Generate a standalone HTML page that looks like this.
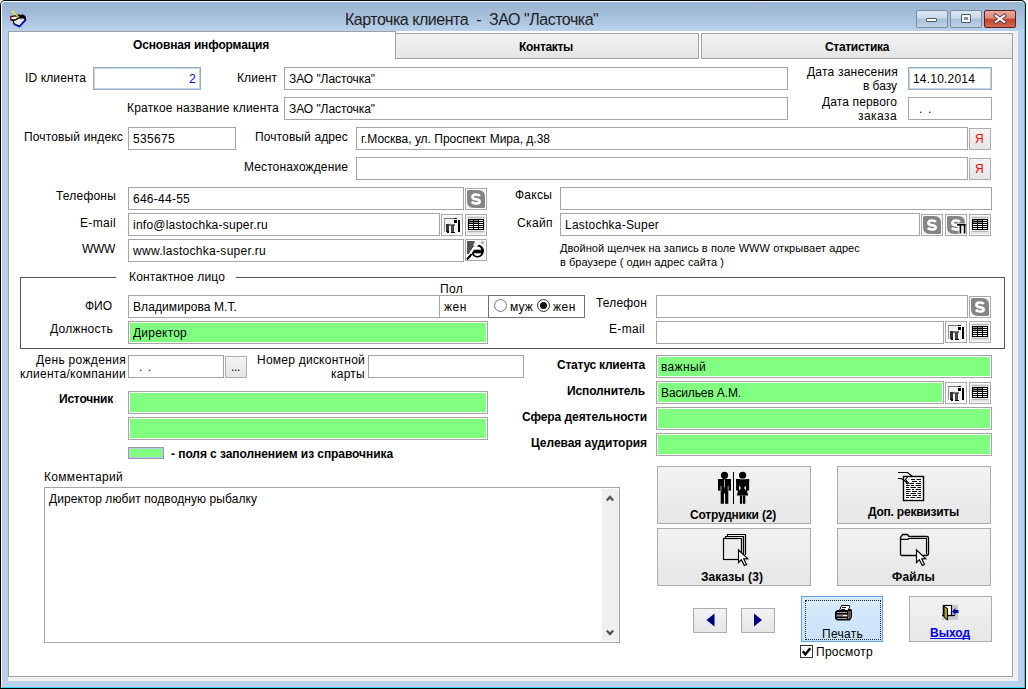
<!DOCTYPE html>
<html><head><meta charset="utf-8">
<style>
*{box-sizing:border-box}
html,body{margin:0;padding:0}
body{width:1028px;height:689px;position:relative;overflow:hidden;background:#fff;font-family:"Liberation Sans",sans-serif;font-size:12px;color:#000}
.a{position:absolute}
#win{left:0;top:0;width:1026px;height:689px;background:#000;border-top-left-radius:5px;border-top-right-radius:5px}
#hl{left:1px;top:1px;width:1024px;height:687px;background:#37d6f2;border-top-left-radius:4px;border-top-right-radius:4px}
#wl{left:1px;top:1px;width:1023px;height:686px;background:#fff;border-top-left-radius:4px;border-top-right-radius:4px}
#fr{left:2px;top:2px;width:1022px;height:685px;background:linear-gradient(#99b4d1 0px,#a6bfda 14px,#b9d1ea 29px,#b9d1ea);border-top-left-radius:3px;border-top-right-radius:3px}
#client{left:8px;top:31px;width:1010px;height:650px;background:#f0f0f0}
#title{left:345px;top:11px;font-size:16px;color:#1e1e1e;white-space:nowrap;letter-spacing:-0.47px}
.t{position:absolute;white-space:nowrap;line-height:14px}
.r{text-align:right}
.b{font-weight:bold}
.in{position:absolute;background:#fff;border:1px solid #a5a5a5}
.gr{background:#80ff80;box-shadow:inset 0 0 0 1px #fff}
.it{position:absolute;left:4px;top:4px;white-space:nowrap;line-height:14px}
.sb{position:absolute;border:1px solid #adadad;background:linear-gradient(#f3f3f3,#e6e6e6)}
.ib{position:absolute;width:22px;height:22px;border:1px solid #a9a9a9;background:#f4f4f4;box-shadow:inset 0 0 0 1px #fff}
.gb{background:#e3e3e3}
.sk{position:absolute;width:18px;height:18px;background:#848484;border-radius:0 7px 0 7px;color:#fff;font-weight:bold;font-size:16px;line-height:18px;text-align:center}
.bb{position:absolute;border:1px solid #acacac;background:linear-gradient(#f2f2f2,#e6e6e6)}
</style></head><body>
<div id="win" class="a"></div>
<div id="hl" class="a"></div>
<div id="wl" class="a"></div>
<div id="fr" class="a"></div>
<div id="client" class="a"></div>
<div id="title" class="a">Карточка клиента&nbsp; - &nbsp;ЗАО "Ласточка"</div>

<!-- tabs -->
<div class="a" style="left:8px;top:31px;width:1005px;height:646px;background:#fff;border:1px solid #a0a0a0;border-top:none"></div>
<div class="a" style="left:395px;top:31px;width:618px;height:2px;background:#fdfdfd"></div>
<div class="a" style="left:8px;top:31px;width:388px;height:3px;border:1px solid #a0a0a0;border-bottom:none;background:#fff"></div>
<div class="a" style="left:395px;top:33px;width:304px;height:26px;border:1px solid #a0a0a0;background:linear-gradient(#f2f2f2,#e5e5e5)"></div>
<div class="a" style="left:701px;top:33px;width:312px;height:26px;border:1px solid #a0a0a0;background:linear-gradient(#f2f2f2,#e5e5e5)"></div>
<div class="a" style="left:699px;top:33px;width:2px;height:26px;background:#fff"></div>
<div class="t b" style="left:133px;top:38px;letter-spacing:-0.148px">Основная информация</div>
<div class="t b" style="left:519px;top:40px;letter-spacing:-0.322px">Контакты</div>
<div class="t b" style="left:825px;top:40px;letter-spacing:-0.306px">Статистика</div>


<!-- caption buttons -->
<div class="a" style="left:916px;top:10px;width:32px;height:18px;border:1px solid #7b8ba0;border-radius:2px;background:linear-gradient(#dbe6f3 0,#cad9ea 45%,#a9bfd8 50%,#bfd2e6 100%)"></div>
<div class="a" style="left:926px;top:18px;width:11px;height:4px;background:#fff;border:1px solid #4a5a70;border-radius:1px"></div>
<div class="a" style="left:950px;top:10px;width:32px;height:18px;border:1px solid #7b8ba0;border-radius:2px;background:linear-gradient(#dbe6f3 0,#cad9ea 45%,#a9bfd8 50%,#bfd2e6 100%)"></div>
<div class="a" style="left:961px;top:14px;width:10px;height:9px;background:#fff;border:1px solid #4a5a70;border-radius:1px"><div class="a" style="left:2px;top:2px;width:4px;height:3px;background:#7d8fa5"></div></div>
<div class="a" style="left:984px;top:10px;width:32px;height:18px;border:1px solid #5a2020;border-radius:2px;background:linear-gradient(#e9a99b 0,#de8a78 45%,#c7402a 50%,#d26a52 100%)"></div>
<svg class="a" style="left:993px;top:13px" width="14" height="12" viewBox="0 0 14 12"><path d="M2.6 2.6 L11.4 9 M11.4 2.6 L2.6 9" stroke="#4a3a48" stroke-width="3.6" stroke-linecap="square" fill="none"/><path d="M2.7 2.7 L11.3 8.9 M11.3 2.7 L2.7 8.9" stroke="#fff" stroke-width="2" stroke-linecap="square" fill="none"/></svg>

<!-- title icon -->
<svg class="a" style="left:9px;top:10px" width="18" height="18" viewBox="9 10 18 18">
<path d="M10 16 L16 15.3 L18.5 14.3 L21 15 L22.5 14.2 L25.5 16 L26.3 19.5 L19.5 27.2 L16.5 25.8 L13.5 24.5 L12.8 21 L10 20.3 Z" fill="#000"/>
<path d="M11.3 16.9 L16.3 16.6 L18 17.6 L15.2 19.3 L11.3 19.3 Z" fill="#f4f4f4"/>
<path d="M13.8 21.3 L17.3 19.8 L19.3 18.6 L23.3 18.4 L24.6 19.6 L19.6 25.2 L17 24.6 L14.6 23.2 Z" fill="#eee"/>
<path d="M15.5 22.5 L18 21 M18 23.5 L21 21.5 M20 19.8 L22.5 19.5" stroke="#bbb" stroke-width="0.8"/>
<rect x="10" y="16.2" width="1.3" height="3.7" fill="#e00000"/>
<path d="M14.2 24.6 L19.4 26.9 L26 20" stroke="#0000ff" stroke-width="1.1" fill="none"/>
<path d="M12 11.3 L19 17.5" stroke="#000" stroke-width="0.6" transform="translate(0.6,0.4)"/>
<path d="M12 11 L19 17.3" stroke="#ffff00" stroke-width="1.1"/>
</svg>

<!-- row 1 -->
<div class="t r" style="right:942px;top:71px;letter-spacing:0.125px">ID клиента</div>
<div class="in" style="left:93px;top:67px;width:108px;height:23px;border-color:#a1aab8"><div class="a" style="left:0;top:0;right:0;bottom:0;border:1px solid #bcd6f5"></div><div class="it" style="right:4px;left:auto;color:#0000ff;letter-spacing:0.328px">2</div></div>
<div class="t r" style="right:751px;top:71px;letter-spacing:0.086px">Клиент</div>
<div class="in" style="left:284px;top:67px;width:504px;height:23px"><div class="it" style="letter-spacing:-0.066px">ЗАО "Ласточка"</div></div>
<div class="t r" style="right:130px;top:65px;letter-spacing:0.224px">Дата занесения</div>
<div class="t r" style="right:131px;top:79px;letter-spacing:-0.031px">в базу</div>
<div class="in" style="left:908px;top:67px;width:84px;height:23px;border-color:#a1aab8"><div class="a" style="left:0;top:0;right:0;bottom:0;border:1px solid #bcd6f5"></div><div class="it" style="letter-spacing:0.197px">14.10.2014</div></div>

<div class="t r" style="right:749px;top:101px;letter-spacing:0.211px">Краткое название клиента</div>
<div class="in" style="left:284px;top:97px;width:504px;height:23px"><div class="it" style="letter-spacing:-0.066px">ЗАО "Ласточка"</div></div>
<div class="t r" style="right:131px;top:95px;letter-spacing:0.132px">Дата первого</div>
<div class="t r" style="right:131px;top:109px;letter-spacing:0.435px">заказа</div>
<div class="in" style="left:908px;top:97px;width:84px;height:23px"><div class="it" style="left:10px;top:4px;letter-spacing:-0.328px">.&nbsp;&nbsp;.</div></div>

<!-- row 3 -->
<div class="t r" style="right:905px;top:130px;letter-spacing:0.151px">Почтовый индекс</div>
<div class="in" style="left:128px;top:127px;width:108px;height:23px"><div class="it" style="letter-spacing:0.328px">535675</div></div>
<div class="t r" style="right:680px;top:130px;letter-spacing:0.117px">Почтовый адрес</div>
<div class="in" style="left:356px;top:127px;width:612px;height:23px"><div class="it" style="letter-spacing:0.000px">г.Москва, ул. Проспект Мира, д.38</div></div>
<div class="sb" style="left:969px;top:128px;width:22px;height:22px"><div class="it" style="left:5px;top:3px;color:#ff0000;letter-spacing:0.328px">Я</div></div>
<div class="t r" style="right:680px;top:160px;letter-spacing:0.118px">Местонахождение</div>
<div class="in" style="left:356px;top:157px;width:612px;height:23px"></div>
<div class="sb" style="left:969px;top:158px;width:22px;height:22px"><div class="it" style="left:5px;top:3px;color:#ff0000;letter-spacing:0.328px">Я</div></div>

<!-- phones -->
<div class="t r" style="right:912px;top:189px;letter-spacing:0.199px">Телефоны</div>
<div class="in" style="left:128px;top:187px;width:336px;height:23px"><div class="it" style="letter-spacing:0.255px">646-44-55</div></div>
<div class="t r" style="right:912px;top:216px;letter-spacing:0.331px">E-mail</div>
<div class="in" style="left:128px;top:213px;width:312px;height:23px"><div class="it" style="letter-spacing:0.236px">info@lastochka-super.ru</div></div>
<div class="t r" style="right:913px;top:242px;letter-spacing:-0.328px">WWW</div>
<div class="in" style="left:128px;top:239px;width:336px;height:23px"><div class="it" style="letter-spacing:0.285px">www.lastochka-super.ru</div></div>
<div class="t r" style="right:476px;top:188px;letter-spacing:0.237px">Факсы</div>
<div class="in" style="left:560px;top:187px;width:432px;height:23px"></div>
<div class="t r" style="right:475px;top:216px;letter-spacing:0.388px">Скайп</div>
<div class="in" style="left:560px;top:213px;width:360px;height:23px"><div class="it" style="letter-spacing:0.220px">Lastochka-Super</div></div>
<div class="t" style="left:560px;top:241px;font-size:11px;letter-spacing:0.067px">Двойной щелчек на запись в поле WWW открывает адрес</div>
<div class="t" style="left:560px;top:255px;font-size:11px;letter-spacing:0.052px">в браузере ( один адрес сайта )</div>

<!-- contact group -->
<div class="a" style="left:20px;top:277px;width:985px;height:72px;border:1px solid #555"></div>
<div class="a" style="left:116px;top:272px;width:120px;height:10px;background:#fff"></div>
<div class="t" style="left:129px;top:270px;letter-spacing:0.159px">Контактное лицо</div>
<div class="t r" style="right:916px;top:299px;letter-spacing:-0.026px">ФИО</div>
<div class="in" style="left:128px;top:295px;width:312px;height:23px"><div class="it" style="letter-spacing:0.090px">Владимирова М.Т.</div></div>
<div class="t" style="left:440px;top:282px;letter-spacing:0.323px">Пол</div>
<div class="in" style="left:439px;top:295px;width:50px;height:23px"><div class="it" style="letter-spacing:0.557px">жен</div></div>
<div class="a" style="left:488px;top:295px;width:97px;height:23px;border:1px solid #707070;background:#fff"></div>
<div class="t r" style="right:915px;top:322px;letter-spacing:0.250px">Должность</div>
<div class="in gr" style="left:128px;top:321px;width:360px;height:23px"><div class="it" style="letter-spacing:0.217px">Директор</div></div>
<div class="t r" style="right:381px;top:296px;letter-spacing:0.174px">Телефон</div>
<div class="in" style="left:656px;top:295px;width:312px;height:23px"></div>
<div class="t r" style="right:383px;top:322px;letter-spacing:0.331px">E-mail</div>
<div class="in" style="left:656px;top:321px;width:288px;height:23px"></div>

<!-- birthday etc -->
<div class="t r" style="right:902px;top:353px;letter-spacing:0.328px">День рождения</div>
<div class="t r" style="right:902px;top:367px;letter-spacing:0.296px">клиента/компании</div>
<div class="in" style="left:128px;top:355px;width:96px;height:23px"><div class="it" style="left:10px;top:4px;letter-spacing:-0.328px">.&nbsp;&nbsp;.</div></div>
<div class="sb" style="left:225px;top:356px;width:22px;height:22px"><div class="it" style="left:5px;top:3px;letter-spacing:-0.328px">...</div></div>
<div class="t r" style="right:663px;top:353px;letter-spacing:0.240px">Номер дисконтной</div>
<div class="t r" style="right:663px;top:367px;letter-spacing:0.256px">карты</div>
<div class="in" style="left:368px;top:355px;width:156px;height:23px"></div>
<div class="t r b" style="right:915px;top:392px;letter-spacing:-0.205px">Источник</div>
<div class="in gr" style="left:128px;top:391px;width:360px;height:23px"></div>
<div class="in gr" style="left:128px;top:417px;width:360px;height:23px"></div>
<div class="a" style="left:128px;top:447px;width:36px;height:12px;border:1px solid #9a9cae;background:#80ff80;box-shadow:inset 0 0 0 1px #b8cce8"></div>
<div class="t b" style="left:171px;top:447px;letter-spacing:-0.067px">- поля с заполнением из справочника</div>

<div class="t r b" style="right:383px;top:358px;letter-spacing:-0.241px">Статус клиента</div>
<div class="in gr" style="left:656px;top:355px;width:336px;height:23px"><div class="it" style="letter-spacing:0.352px">важный</div></div>
<div class="t r b" style="right:383px;top:384px;letter-spacing:-0.125px">Исполнитель</div>
<div class="in gr" style="left:656px;top:381px;width:288px;height:23px"><div class="it" style="letter-spacing:-0.127px">Васильев А.М.</div></div>
<div class="t r b" style="right:381px;top:410px;letter-spacing:-0.058px">Сфера деятельности</div>
<div class="in gr" style="left:656px;top:407px;width:336px;height:23px"></div>
<div class="t r b" style="right:381px;top:436px;letter-spacing:-0.043px">Целевая аудитория</div>
<div class="in gr" style="left:656px;top:433px;width:336px;height:23px"></div>

<!-- comment -->
<div class="t" style="left:44px;top:470px;letter-spacing:0.312px">Комментарий</div>
<div class="in" style="left:44px;top:487px;width:576px;height:156px"><div class="it" style="left:4px;top:4px;letter-spacing:0.080px">Директор любит подводную рыбалку</div>
<div class="a" style="left:557px;top:1px;width:17px;height:152px;background:#f0f0f0"></div></div>

<!-- big buttons -->
<div class="bb" style="left:657px;top:466px;width:154px;height:58px"></div>
<div class="t b" style="left:690px;top:508px;letter-spacing:-0.196px">Сотрудники (2)</div>
<div class="bb" style="left:837px;top:466px;width:154px;height:58px"></div>
<div class="t b" style="left:868px;top:505px;letter-spacing:-0.224px">Доп. реквизиты</div>
<div class="bb" style="left:657px;top:528px;width:154px;height:58px"></div>
<div class="t b" style="left:701px;top:570px;letter-spacing:0.078px">Заказы (3)</div>
<div class="bb" style="left:837px;top:528px;width:154px;height:58px"></div>
<div class="t b" style="left:892px;top:570px;letter-spacing:0.166px">Файлы</div>

<!-- nav -->
<div class="bb" style="left:693px;top:608px;width:34px;height:25px"></div>
<div class="bb" style="left:741px;top:608px;width:34px;height:25px"></div>
<div class="a" style="left:801px;top:596px;width:82px;height:46px;border:1px solid #5ea6e8;background:linear-gradient(#d9ebfb,#c8e2f8)"></div>
<div class="t" style="left:822px;top:627px;letter-spacing:0.281px">Печать</div>
<div class="bb" style="left:909px;top:596px;width:83px;height:46px"></div>
<div class="t b" style="left:930px;top:626px;color:#0000ff;text-decoration:underline;text-decoration-skip-ink:none;letter-spacing:-0.019px">Выход</div>
<div class="a" style="left:800px;top:645px;width:13px;height:13px;border:1px solid #333;background:#fff"></div>
<div class="t" style="left:816px;top:645px;letter-spacing:0.275px">Просмотр</div>

<!-- small icon buttons -->
<div class="ib" style="left:465px;top:188px"></div><svg class="a" style="left:467px;top:190px" width="18" height="18"><use href="#skic"/></svg>
<div class="ib" style="left:441px;top:214px"></div><svg class="a" style="left:441px;top:214px" width="22" height="22"><use href="#docic"/></svg>
<div class="ib gb" style="left:465px;top:214px"></div><svg class="a" style="left:465px;top:214px" width="22" height="22"><use href="#gridic"/></svg>
<div class="ib" style="left:465px;top:239px"></div><svg class="a" style="left:465px;top:239px" width="22" height="22"><use href="#ieic"/></svg>
<div class="ib" style="left:921px;top:214px"></div><svg class="a" style="left:923px;top:216px" width="18" height="18"><use href="#skic"/></svg>
<div class="ib" style="left:945px;top:214px"></div><svg class="a" style="left:947px;top:216px" width="18" height="18"><use href="#skic"/></svg><svg class="a" style="left:945px;top:214px" width="22" height="22"><path d="M11 9.5 H21 V20.5 H13.5 V12.5 H11 Z" fill="#fff" opacity="0.9"/><rect x="12" y="10" width="8.5" height="1.6" fill="#000"/><rect x="14.6" y="10" width="1.6" height="9.5" fill="#000"/><rect x="18.8" y="10" width="1.6" height="9.5" fill="#000"/></svg>
<div class="ib gb" style="left:969px;top:214px"></div><svg class="a" style="left:969px;top:214px" width="22" height="22"><use href="#gridic"/></svg>
<div class="ib" style="left:969px;top:296px"></div><svg class="a" style="left:971px;top:298px" width="18" height="18"><use href="#skic"/></svg>
<div class="ib" style="left:945px;top:321px"></div><svg class="a" style="left:945px;top:321px" width="22" height="22"><use href="#docic"/></svg>
<div class="ib gb" style="left:969px;top:321px"></div><svg class="a" style="left:969px;top:321px" width="22" height="22"><use href="#gridic"/></svg>
<div class="ib" style="left:945px;top:382px"></div><svg class="a" style="left:945px;top:382px" width="22" height="22"><use href="#docic"/></svg>
<div class="ib gb" style="left:969px;top:382px"></div><svg class="a" style="left:969px;top:382px" width="22" height="22"><use href="#gridic"/></svg>

<svg width="0" height="0" style="position:absolute">
<defs>
<g id="skic">
<path d="M0 1.5 Q0 0 1.5 0 H11 Q18 0 18 7 V16.5 Q18 18 16.5 18 H7 Q0 18 0 11 Z" fill="#858585"/>
<path d="M12.8 6 Q11.7 4.5 8.8 4.5 Q5.4 4.5 5.4 7.1 Q5.4 8.8 8.3 9.2 L9.7 9.4 Q12.6 9.8 12.6 11.7 Q12.6 13.5 9 13.5 Q6 13.5 4.9 11.7" stroke="#fff" stroke-width="2.7" fill="none"/>
</g>
<g id="gridic">
<rect x="3" y="3" width="16" height="1" fill="#b8b8b8"/>
<rect x="3" y="17" width="16" height="1" fill="#b8b8b8"/>
<rect x="3" y="5" width="16" height="11" fill="#000"/>
<g fill="#fff"><rect x="14" y="6" width="4" height="1"/><rect x="14" y="8" width="4" height="1"/>
<rect x="4" y="10" width="4" height="1"/><rect x="9" y="10" width="4" height="1"/><rect x="14" y="10" width="4" height="1"/>
<rect x="4" y="12" width="4" height="1"/><rect x="9" y="12" width="4" height="1"/><rect x="14" y="12" width="4" height="1"/>
<rect x="4" y="14" width="4" height="1"/><rect x="9" y="14" width="4" height="1"/><rect x="14" y="14" width="4" height="1"/></g>
<g fill="#8a8a8a"><rect x="4" y="6" width="4" height="1"/><rect x="9" y="6" width="4" height="1"/><rect x="4" y="8" width="4" height="1"/><rect x="9" y="8" width="4" height="1"/></g>
</g>
<g id="docic" shape-rendering="crispEdges">
<rect x="3" y="4" width="10" height="1" fill="#777"/>
<rect x="13" y="4" width="3" height="1" fill="#111"/>
<rect x="3" y="5" width="1" height="13" fill="#999"/>
<rect x="13" y="6" width="3" height="3" fill="#000"/>
<rect x="17" y="6" width="2" height="12" fill="#000"/>
<rect x="5" y="10" width="9" height="2" fill="#777"/>
<rect x="5" y="10" width="3" height="8" fill="#333"/>
<rect x="10" y="11" width="3" height="8" fill="#444"/>
<rect x="6" y="17" width="2" height="2" fill="#000"/>
<rect x="10" y="18" width="4" height="1" fill="#000"/>
</g>
<g id="ieic">
<path d="M2 2 H10 L5 15 L2 15 Z" fill="#555"/>
<circle cx="12.5" cy="12" r="6.5" fill="#000"/>
<path d="M8.5 10.8 Q9.5 7.5 12.5 7.5 Q15.5 7.5 16.2 10.8 Z" fill="#fff"/>
<path d="M8.8 13.5 H16.5 Q15.5 17 12.5 17 Q10 17 8.8 15 Z" fill="#fff"/>
<rect x="8" y="13" width="9" height="1.3" fill="#000"/>
<path d="M3.5 20 Q6 10 14 4" stroke="#fff" stroke-width="2.2" fill="none"/>
<path d="M2 20.5 L5 17 L6.5 15" stroke="#000" stroke-width="2" fill="none"/>
<circle cx="17.5" cy="3.5" r="1.5" fill="#aaa"/>
</g>
</defs>
</svg>

<!-- radio buttons -->
<div class="a" style="left:494px;top:299px;width:13px;height:13px;border-radius:50%;border:1px solid #777;background:radial-gradient(#fff 40%,#ececec)"></div>
<div class="t" style="left:510px;top:300px;letter-spacing:0.146px">муж</div>
<div class="a" style="left:537px;top:299px;width:13px;height:13px;border-radius:50%;border:1px solid #333;background:#fff"></div>
<div class="a" style="left:540px;top:302px;width:7px;height:7px;border-radius:50%;background:#111"></div>
<div class="t" style="left:553px;top:300px;letter-spacing:0.557px">жен</div>

<!-- big button icons -->
<svg class="a" style="left:718px;top:471px" width="33" height="34" viewBox="0 0 33 34">
<g fill="#000">
<circle cx="6.5" cy="4.3" r="3.6"/>
<rect x="0" y="8" width="13" height="4"/>
<rect x="0" y="8" width="2.9" height="11.6"/>
<rect x="10.1" y="8" width="2.9" height="11.6"/>
<rect x="2.7" y="8" width="7.6" height="14.5"/>
<rect x="2.7" y="22" width="3.2" height="10.8"/>
<rect x="7.1" y="22" width="3.2" height="10.8"/>
<rect x="15" y="1" width="1" height="32"/>
<circle cx="24.6" cy="4.3" r="3.6"/>
<rect x="18.1" y="8" width="13" height="4"/>
<rect x="18.1" y="8" width="2.9" height="11.6"/>
<rect x="28.2" y="8" width="2.9" height="11.6"/>
<rect x="20" y="8" width="9" height="12.5"/>
<path d="M20 20 H29 L30.2 24.6 H18.8 Z"/>
<rect x="21.9" y="24.5" width="2.3" height="8.3"/>
<rect x="25" y="24.5" width="2.3" height="8.3"/>
</g>
<g fill="#fff">
<rect x="6.2" y="8.5" width="0.7" height="8"/>
<rect x="2.7" y="15" width="0.6" height="4.6"/>
<rect x="9.8" y="15" width="0.6" height="4.6"/>
<path d="M21.2 14.5 L23 17 L21.2 19.5 Z"/>
<path d="M27.9 14.5 L26.1 17 L27.9 19.5 Z"/>
<rect x="21.5" y="7.6" width="6" height="0.7"/>
</g>
</svg>

<svg class="a" style="left:722px;top:533px" width="28" height="34" viewBox="0 0 28 34">
<g stroke="#000" stroke-width="1.2" fill="none">
<path d="M5.5 3.5 V1.5 H23.5 V22"/>
<path d="M3.5 5.5 V3.5 H21.5 V23"/>
<rect x="1.5" y="5.5" width="18" height="21" fill="#ececec"/>
</g>
<path d="M16.5 17 V29.5 L19.3 26.8 L22.3 32.5 L24.5 31.5 L21.7 25.8 L25.7 25.6 Z" fill="#fff" stroke="#000" stroke-width="1.2" stroke-linejoin="miter"/>
</svg>

<svg class="a" style="left:896px;top:470px" width="30" height="32" viewBox="0 0 30 32">
<rect x="7.5" y="6.5" width="20" height="24" fill="#fff" stroke="#000" stroke-width="1.4"/>
<g stroke="#000" stroke-width="1.1">
<path d="M10 9.5 H13 M15 9.5 H19 M20.5 9.5 H25"/>
<path d="M10 11.5 H11 M16 11.5 H21 M23 11.5 H25"/>
<path d="M10 13.5 H12 M14 13.5 H18 M20 13.5 H25"/>
<path d="M10 15.5 H13.5 M15 15.5 H18 M19.5 15.5 H25"/>
<path d="M10 17.5 H13 M14.5 17.5 H20 M21.5 17.5 H25"/>
<path d="M10 19.5 H14.5 M16 19.5 H18 M19.5 19.5 H25"/>
<path d="M10 21.5 H14.5 M16 21.5 H21 M22.5 21.5 H25"/>
<path d="M10 23.5 H13 M14.5 23.5 H20 M21.5 23.5 H25"/>
<path d="M10 25.5 H15 M16.5 25.5 H21 M22.5 25.5 H25"/>
<path d="M10 27.5 H13 M14.5 27.5 H19 M20.5 27.5 H25"/>
</g>
<path d="M2 2.5 H11.5 L16.5 6.5" stroke="#000" stroke-width="1.2" fill="none"/>
<path d="M2 8.5 H5 L9 11 L12 14" stroke="#000" stroke-width="1.2" fill="none"/>
<path d="M13.5 14 L9.5 9.5 L12 6.5" stroke="#000" stroke-width="1.1" fill="#fff"/>
</svg>

<svg class="a" style="left:898px;top:533px" width="32" height="34" viewBox="0 0 32 34">
<path d="M2.5 5 Q2.5 3.5 4 2.5 L4.5 1.5 H9.5 L11 3.5 H29 Q30.5 3.5 30.5 5 V20.5 Q30.5 22.5 28.5 22.5 H4 Q2.5 22.5 2.5 21 Z" fill="#ececec" stroke="#000" stroke-width="1.3"/>
<path d="M3 6.3 H10 L10.5 5.5 H28.5 V21.5" stroke="#000" stroke-width="1.2" fill="none"/>
<path d="M18.5 17 V29.5 L21.3 26.8 L24.3 32.5 L26.5 31.5 L23.7 25.8 L27.7 25.6 Z" fill="#fff" stroke="#000" stroke-width="1.2"/>
</svg>

<!-- nav triangles -->
<svg class="a" style="left:705px;top:612px" width="12" height="16"><path d="M1.5 8 L9.5 1.5 V14.5 Z" fill="#000080"/></svg>
<svg class="a" style="left:752px;top:612px" width="12" height="16"><path d="M10 8 L2 1.5 V14.5 Z" fill="#000080"/></svg>

<!-- print focus + icon -->
<div class="a" style="left:805px;top:600px;width:76px;height:40px;border:1px dotted #222"></div>
<svg class="a" style="left:834px;top:604px" width="20" height="17" viewBox="834 604 20 17">
<path d="M839.5 610.5 L841.5 605.5 H849.5 V607.5 L848 610.5 Z" fill="#fff" stroke="#000" stroke-width="1"/>
<path d="M842 607.5 H846 M841.3 609.5 H845" stroke="#000" stroke-width="0.9"/>
<path d="M837 610 H847.5 L849 609 H851 L852 610.5 V617 L850 620.5 H837 L835 618.5 V612 Z" fill="#000"/>
<path d="M848 611 L851 611 L851 617 L848 619.5 Z" fill="#777"/>
<path d="M848.5 612 L850.5 612 M848.5 614 L850.5 614 M848.5 616 L850 616" stroke="#000" stroke-width="0.8"/>
<rect x="837" y="612" width="10" height="1" fill="#9a9a9a"/>
<rect x="836.5" y="614.5" width="11" height="2" fill="#8c8c8c"/>
<rect x="843" y="615" width="4" height="1.2" fill="#fff"/>
<rect x="837" y="618" width="10" height="1" fill="#9a9a9a"/>
</svg>

<!-- exit icon -->
<svg class="a" style="left:941px;top:604px" width="19" height="17" viewBox="0 0 19 17">
<rect x="1" y="1" width="16" height="15" fill="#c9c9c9"/>
<rect x="2.5" y="1.5" width="8" height="10" fill="#fff" stroke="#000" stroke-width="1.2"/>
<path d="M1 11.5 H14" stroke="#000" stroke-width="1.2"/>
<path d="M3 2.5 L6.5 4.5 V16 L3 13 Z" fill="#a8a020" stroke="#000" stroke-width="1"/>
<path d="M11 7.5 L14.5 4 V6 H17.5 V9 H14.5 V11 Z" fill="#0000a8"/>
</svg>

<!-- checkbox -->
<svg class="a" style="left:801px;top:646px" width="11" height="11"><path d="M1.8 5.3 L4.3 8.3 L9.3 2.2" stroke="#000" stroke-width="2.4" fill="none"/></svg>

<!-- scrollbar arrows -->
<svg class="a" style="left:605px;top:493px" width="10" height="10"><path d="M1.8 7.6 L5 4 L8.2 7.6" stroke="#555" stroke-width="2.3" fill="none"/></svg>
<svg class="a" style="left:605px;top:627px" width="10" height="10"><path d="M1.8 3.4 L5 7 L8.2 3.4" stroke="#555" stroke-width="2.3" fill="none"/></svg>

</body></html>
